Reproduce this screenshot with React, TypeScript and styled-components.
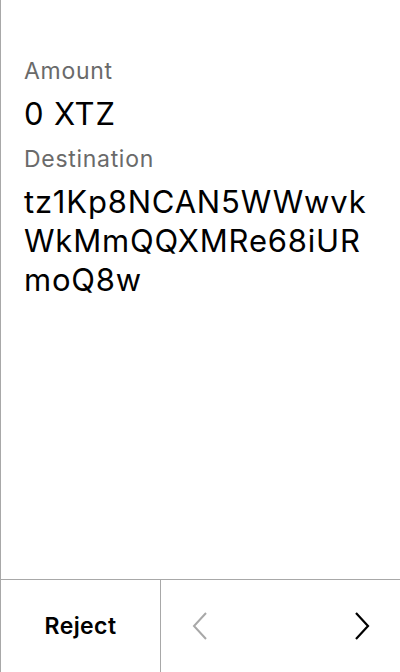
import React from "react";
import styled, { createGlobalStyle } from "styled-components";

const Global = createGlobalStyle`
  html, body { margin: 0; padding: 0; background: #fff; }
  body { font-family: Inter, "Noto Sans", sans-serif; }
  #root { height: 672px; }
`;

const Screen = styled.div`
  width: 400px;
  height: 672px;
  box-sizing: border-box;
  border-left: 1px solid #a8a8a8;
  display: flex;
  flex-direction: column;
`;

const Content = styled.div`
  flex: 1;
  padding: 57px 24px 0 23px;
  display: flex;
  flex-direction: column;
`;

const Label = styled.div`
  font-size: 23px;
  line-height: 28px;
  letter-spacing: 0.7px;
  color: #6a6a6a;
  margin-bottom: 9px;
`;

const Value = styled.div`
  font-size: 31px;
  line-height: 39px;
  letter-spacing: 0.8px;
  color: #000;
  word-break: break-all;
  margin-bottom: 12px;
`;

const Footer = styled.div`
  height: 92px;
  border-top: 1px solid #a8a8a8;
  display: grid;
  grid-template-columns: 160px 1fr;
`;

const RejectButton = styled.button`
  border: none;
  border-right: 1px solid #a8a8a8;
  background: none;
  font-family: Inter, "Noto Sans", sans-serif;
  font-size: 23px;
  font-weight: 600;
  letter-spacing: 0.4px;
  color: #000;
  padding: 0;
`;

const Nav = styled.div`
  display: flex;
  align-items: center;
  justify-content: space-between;
  padding: 0 30px 0 31px;
`;

const Arrow = styled.svg<{ $muted?: boolean }>`
  width: 16px;
  height: 28px;
  color: ${(p) => (p.$muted ? "#a8a8a8" : "#000")};
`;

export default function App() {
  return (
    <>
      <Global />
      <Screen>
        <Content>
          <Label>Amount</Label>
          <Value>0 XTZ</Value>
          <Label>Destination</Label>
          <Value>tz1Kp8NCAN5WWwvkWkMmQQXMRe68iURmoQ8w</Value>
        </Content>
        <Footer>
          <RejectButton>Reject</RejectButton>
          <Nav>
            <Arrow $muted viewBox="0 0 16 28" fill="none">
              <path d="M14 1 L2 14 L14 27" stroke="currentColor" strokeWidth="2" />
            </Arrow>
            <Arrow viewBox="0 0 16 28" fill="none">
              <path d="M2 1 L14 14 L2 27" stroke="currentColor" strokeWidth="2.2" />
            </Arrow>
          </Nav>
        </Footer>
      </Screen>
    </>
  );
}
